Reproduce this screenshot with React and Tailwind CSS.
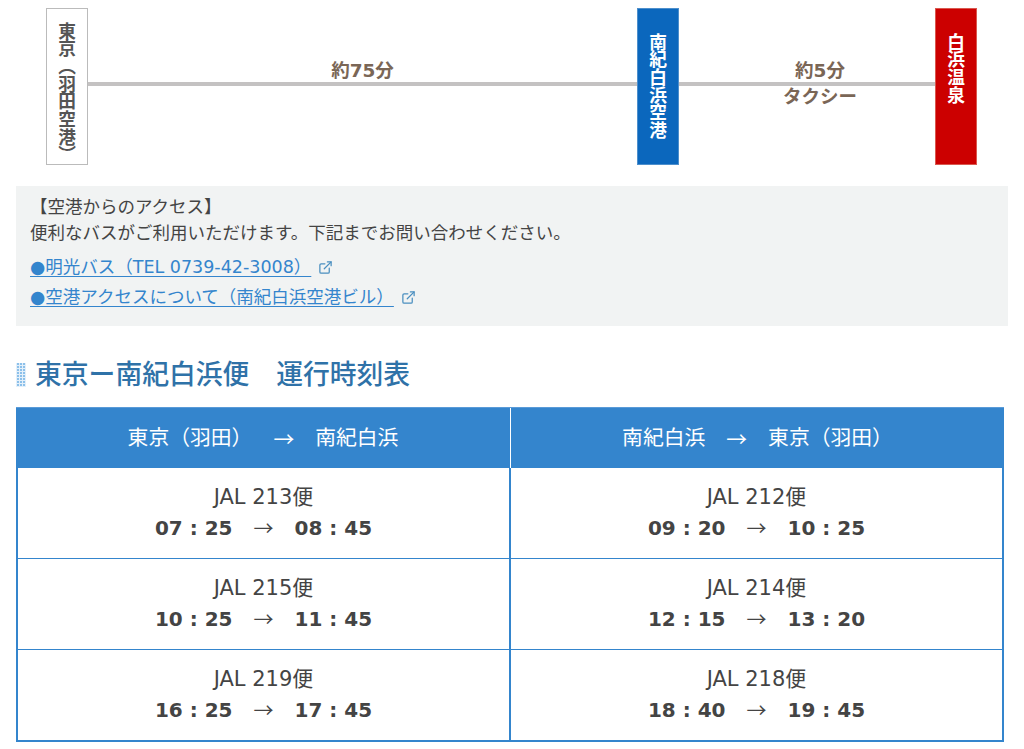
import React from 'react';
import { ExternalLink } from 'lucide-react';

const font = { fontFamily: '"DejaVu Sans", "Noto Sans CJK JP", sans-serif' };

const rows = [
  [
    { name: 'JAL 213便', from: '07 : 25', to: '08 : 45' },
    { name: 'JAL 212便', from: '09 : 20', to: '10 : 25' },
  ],
  [
    { name: 'JAL 215便', from: '10 : 25', to: '11 : 45' },
    { name: 'JAL 214便', from: '12 : 15', to: '13 : 20' },
  ],
  [
    { name: 'JAL 219便', from: '16 : 25', to: '17 : 45' },
    { name: 'JAL 218便', from: '18 : 40', to: '19 : 45' },
  ],
];

const Stop = ({ label, className }) => (
  <div className={`w-[42px] h-[157px] shrink-0 flex items-center pr-[4px] font-bold text-[17.7px] leading-[18px] [writing-mode:vertical-rl] border ${className}`}>
    {label}
  </div>
);

const Connector = ({ top, bottom, className, labelClass = '' }) => (
  <div className={`flex flex-col items-center text-[#7a6656] font-bold text-[18.5px] leading-[18px] ${className}`}>
    <div className={`h-[74px] flex items-end pb-[2px] ${labelClass}`}>{top}</div>
    <div className="w-full h-[4px] bg-[#c4c2c2]" />
    {bottom && <div className={`mt-[2px] ${labelClass}`}>{bottom}</div>}
  </div>
);

const Arrow = () => (
  <span className="mx-[21px] font-normal [font-family:'Noto_Sans_CJK_JP']">→</span>
);

const Flight = ({ flight }) => (
  <div className="h-[90px] flex flex-col items-center pt-[16px]">
    <div className="text-[21px] leading-[27px] text-[#444]">{flight.name}</div>
    <div className="mt-[2px] text-[20px] leading-[30px] font-bold text-[#444] flex">
      <span>{flight.from}</span>
      <Arrow />
      <span>{flight.to}</span>
    </div>
  </div>
);

const App = () => {
  return (
    <div className="w-[1024px] h-[749px] overflow-hidden bg-white pt-[8px]" style={font}>
      <div className="flex ml-[46px] w-[931px]">
        <Stop label="東京（羽田空港）" className="border-[#bbb] bg-white text-[#555] pt-[13px]" />
        <Connector top="約75分" className="w-[549px]" />
        <Stop label="南紀白浜空港" className="border-[#4d8fcc] bg-[#0b67bd] text-white pt-[24px]" />
        <Connector top="約5分" bottom="タクシー" className="w-[256px]" labelClass="ml-[26px]" />
        <Stop label="白浜温泉" className="border-[#d9584f] bg-[#cc0000] text-white pt-[24px]" />
      </div>

      <div className="mx-[16px] mt-[21px] h-[140px] bg-[#f1f3f3] pl-[14px] pt-[9px] text-[17.5px] text-[#444]">
        <div className="leading-[25px]">【空港からのアクセス】</div>
        <div className="leading-[27px]">便利なバスがご利用いただけます。下記までお問い合わせください。</div>
        <div className="mt-[5px] leading-[30px] flex items-center">
          <a className="text-[#3485cd] underline underline-offset-[3px]">●明光バス（TEL 0739-42-3008）</a>
          <ExternalLink className="w-[15px] h-[15px] ml-[7px] text-[#4a8fc0]" strokeWidth={2} />
        </div>
        <div className="leading-[30px] flex items-center">
          <a className="text-[#3485cd] underline underline-offset-[3px]">●空港アクセスについて（南紀白浜空港ビル）</a>
          <ExternalLink className="w-[15px] h-[15px] ml-[7px] text-[#4a8fc0]" strokeWidth={2} />
        </div>
      </div>

      <div className="mx-[16px] mt-[30px] flex items-center h-[36px]">
        <div className="w-[10px] h-[24px] mt-[1px] bg-[#8cc0ea] bg-[repeating-linear-gradient(0deg,#e4f0fa_0,#e4f0fa_1px,transparent_1px,transparent_3px),repeating-linear-gradient(90deg,#e4f0fa_0,#e4f0fa_1px,transparent_1px,transparent_3px)]" />
        <h2 className="ml-[9px] mt-[2px] text-[26.8px] font-medium text-[#2f72a8] whitespace-nowrap">東京ー南紀白浜便　運行時刻表</h2>
      </div>

      <div className="ml-[16px] mt-[15px] w-[988px] grid grid-cols-[495px_1fr] border-t border-[#5a9bd8]">
        <div className="h-[60px] pt-[2px] bg-[#3485cd] text-white text-[20.8px] flex items-center justify-center border-r border-white">
          <span>東京（羽田）</span><Arrow /><span>南紀白浜</span>
        </div>
        <div className="h-[60px] pt-[2px] bg-[#3485cd] text-white text-[20.8px] flex items-center justify-center">
          <span>南紀白浜</span><Arrow /><span>東京（羽田）</span>
        </div>
      </div>
      <div className="ml-[16px] w-[988px] border-2 border-t-0 border-[#3485cd]">
        {rows.map((row, i) => (
          <div key={i} className={`grid grid-cols-[493px_1fr] ${i < rows.length - 1 ? 'border-b border-[#3485cd]' : ''}`}>
            <div className="border-r-2 border-[#3485cd]"><Flight flight={row[0]} /></div>
            <Flight flight={row[1]} />
          </div>
        ))}
      </div>
      <div className="ml-[610px] mt-[7px] w-[4px] h-[1px] bg-[#c9c4b8]" />
    </div>
  );
};

export default App;
